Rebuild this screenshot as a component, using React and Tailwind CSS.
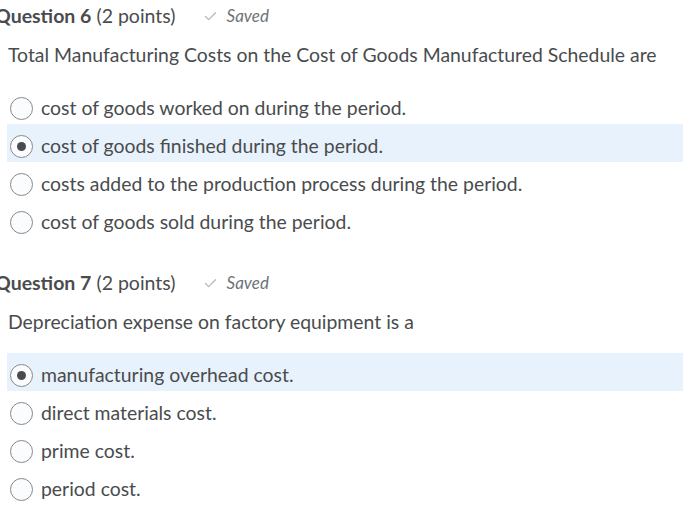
import { Check } from 'lucide-react'

const questions = [
  {
    num: 6,
    text: 'Total Manufacturing Costs on the Cost of Goods Manufactured Schedule are',
    options: [
      'cost of goods worked on during the period.',
      'cost of goods finished during the period.',
      'costs added to the production process during the period.',
      'cost of goods sold during the period.',
    ],
    selected: 1,
  },
  {
    num: 7,
    text: 'Depreciation expense on factory equipment is a',
    options: [
      'manufacturing overhead cost.',
      'direct materials cost.',
      'prime cost.',
      'period cost.',
    ],
    selected: 0,
  },
]

export default function App() {
  return (
    <div className="w-[683px] h-[532px] overflow-hidden bg-white text-[#494c4e] font-['Lato','Noto_Sans',sans-serif]">
      {questions.map((q, i) => (
        <Question key={q.num} q={q} first={i === 0} />
      ))}
    </div>
  )
}

function Question({ q, first }) {
  return (
    <div className={first ? 'pt-[4px]' : 'pt-[33px]'}>
      {/* Header */}
      <div className="flex items-center h-[24px] -ml-[5px]">
        <span className="text-[19.5px] font-bold">Question {q.num}</span>
        <span className="text-[19.5px] ml-[5px]">(2 points)</span>
        <Check className="w-[15px] h-[15px] ml-[27px] text-[#b5b8ba]" strokeWidth={2} />
        <span className="text-[17px] italic text-[#6e7376] ml-[9px]">Saved</span>
      </div>

      {/* Question text */}
      <p className="text-[19.4px] ml-[8px] mt-[15px] leading-[24px] whitespace-nowrap">{q.text}</p>

      {/* Options */}
      <div className="mt-[19px] ml-[7px]">
        {q.options.map((opt, idx) => {
          const sel = idx === q.selected
          return (
            <div
              key={idx}
              className={`flex items-center h-[38px] pt-[6px] ${sel ? 'bg-[#e8f2fc]' : ''}`}
            >
              <span className="ml-[3px] w-[23px] h-[23px] rounded-full border border-[#85898c] bg-[#fbfcfe] flex items-center justify-center shrink-0">
                {sel && <span className="w-[9px] h-[9px] rounded-full bg-[#494c4e]" />}
              </span>
              <span className="ml-[8px] text-[19.4px] whitespace-nowrap">{opt}</span>
            </div>
          )
        })}
      </div>
    </div>
  )
}
